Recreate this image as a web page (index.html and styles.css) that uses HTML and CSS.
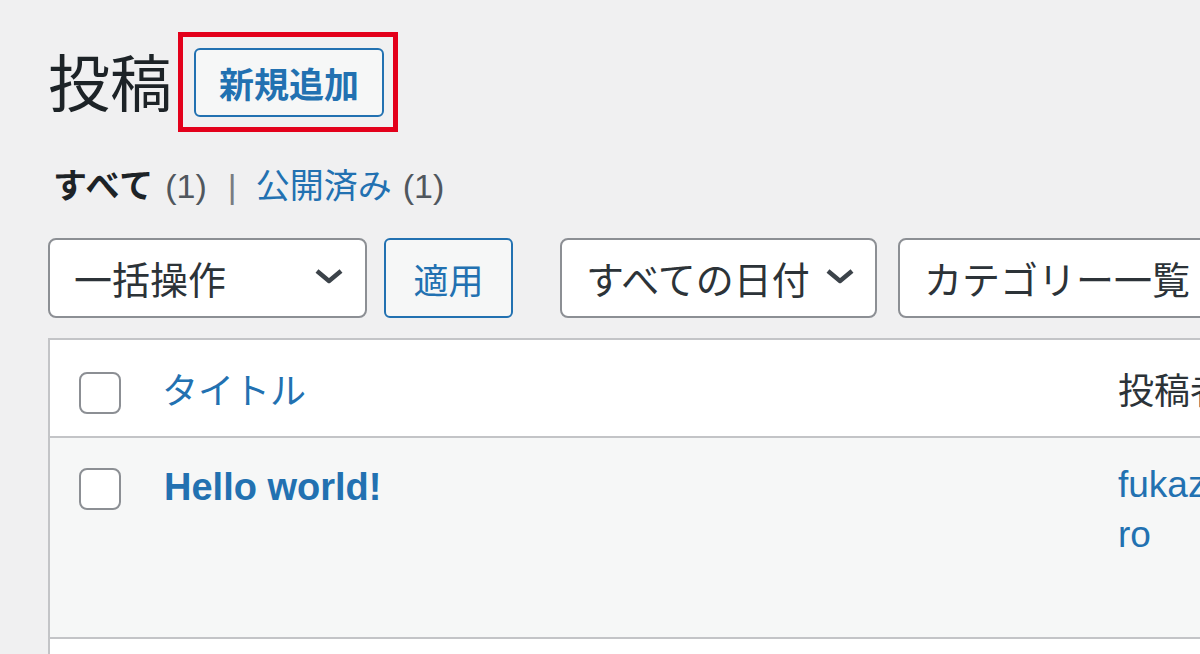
FILE: index.html
```html
<!DOCTYPE html>
<html lang="ja">
<head>
<meta charset="utf-8">
<title>投稿</title>
<link rel="stylesheet" href="styles.css">
</head>
<body>
<div class="wrap">
  <div class="title-row">
    <h1 class="page-title">投稿</h1>
    <div class="highlight">
      <a class="page-title-action" href="#">新規追加</a>
    </div>
  </div>

  <div class="subsubsub">
    <a class="current" href="#">すべて</a><span class="count">(1)</span>
    <span class="sep">|</span>
    <a class="status" href="#">公開済み</a><span class="count">(1)</span>
  </div>

  <div class="tablenav">
    <div class="select select-bulk">
      <span class="select-text">一括操作</span>
      <svg class="chev" width="30" height="16" viewBox="0 0 30 16"><path d="M3 3 L15 13 L27 3" fill="none" stroke="#3c434a" stroke-width="4.5" stroke-linejoin="round"/></svg>
    </div>
    <a class="button" href="#">適用</a>
    <div class="select select-date">
      <span class="select-text">すべての日付</span>
      <svg class="chev" width="30" height="16" viewBox="0 0 30 16"><path d="M3 3 L15 13 L27 3" fill="none" stroke="#3c434a" stroke-width="4.5" stroke-linejoin="round"/></svg>
    </div>
    <div class="select select-cat">
      <span class="select-text">カテゴリー一覧</span>
    </div>
  </div>

  <div class="list-table">
    <div class="row head">
      <span class="checkbox"></span>
      <a class="col-title head-title" href="#">タイトル</a>
      <span class="col-author head-author">投稿者</span>
    </div>
    <div class="row item">
      <span class="checkbox"></span>
      <a class="col-title row-title" href="#">Hello world!</a>
      <a class="col-author author-link" href="#">fukazi<br>ro</a>
    </div>
    <div class="row next"></div>
  </div>
</div>
</body>
</html>
```

FILE: styles.css
```css
html, body {
  margin: 0;
  padding: 0;
}
body {
  width: 1200px;
  height: 654px;
  overflow: hidden;
  background: #f0f0f1;
  font-family: "Liberation Sans", "Noto Sans CJK JP", sans-serif;
  color: #2c3338;
}
a {
  text-decoration: none;
  color: #2271b1;
}
.wrap {
  padding: 32px 0 0 48px;
}

/* title row */
.title-row {
  display: flex;
  align-items: center;
  height: 100px;
}
.page-title {
  margin: -4px 6px 0 0;
  font-size: 62px;
  line-height: 1;
  font-weight: 400;
  color: #1d2327;
  font-family: "Noto Sans CJK JP", sans-serif;
}
.highlight {
  border: 5px solid #e3001b;
  padding: 11px 9px 10px 11px;
}
.page-title-action {
  display: flex;
  align-items: center;
  justify-content: center;
  box-sizing: border-box;
  width: 190px;
  height: 69px;
  border: 2px solid #2271b1;
  border-radius: 6px;
  background: #f6f7f7;
  font-family: "Noto Sans CJK JP", sans-serif;
  font-weight: 700;
  font-size: 35px;
  color: #2271b1;
}

/* status links */
.subsubsub {
  margin-top: 34px;
  height: 40px;
  display: flex;
  align-items: center;
  font-size: 34px;
  line-height: 40px;
  color: #50575e;
  white-space: nowrap;
}
.subsubsub .current {
  color: #1d2327;
  font-weight: 700;
  margin-left: 5px;
  letter-spacing: 1px;
}
.subsubsub .count {
  margin-left: 11px;
  color: #50575e;
}
.subsubsub .sep {
  margin: 0 19px 0 21px;
  color: #787c82;
}
.subsubsub .status {
  color: #2271b1;
}

/* filters */
.tablenav {
  margin-top: 32px;
  display: flex;
  align-items: center;
  height: 80px;
}
.select {
  box-sizing: border-box;
  height: 80px;
  border: 2px solid #8c8f94;
  border-radius: 8px;
  background: #fff;
  display: flex;
  align-items: center;
  justify-content: space-between;
  font-size: 38px;
  color: #2c3338;
  white-space: nowrap;
  flex-shrink: 0;
}
.select-text {
  font-family: "Noto Sans CJK JP", sans-serif;
  line-height: 1;
}
.chev {
  display: block;
  margin-bottom: 4px;
}
.select-bulk {
  width: 319px;
  padding: 0 21px 0 24px;
}
.select-date {
  width: 317px;
  padding: 0 20px 0 24px;
  margin-left: 47px;
}
.select-cat {
  width: 340px;
  padding: 0 24px;
  margin-left: 21px;
  justify-content: flex-start;
}
.button {
  box-sizing: border-box;
  width: 129px;
  height: 80px;
  margin-left: 17px;
  border: 2px solid #2271b1;
  border-radius: 6px;
  background: #f6f7f7;
  display: flex;
  align-items: center;
  justify-content: center;
  font-family: "Noto Sans CJK JP", sans-serif;
  font-size: 35px;
  color: #2271b1;
  flex-shrink: 0;
}

/* table */
.list-table {
  margin-top: 20px;
  width: 1300px;
  border: 2px solid #c3c4c7;
  border-bottom: none;
  background: #fff;
}
.row {
  display: flex;
  border-bottom: 2px solid #c3c4c7;
}
.checkbox {
  box-sizing: border-box;
  width: 42px;
  height: 42px;
  border: 2px solid #8c8f94;
  border-radius: 8px;
  background: #fff;
  margin-left: 29px;
  flex-shrink: 0;
}
.col-title {
  margin-left: 41px;
  width: 956px;
  flex-shrink: 0;
}
.col-author {
  flex-shrink: 0;
}
.head {
  height: 96px;
  align-items: center;
}
.head .checkbox {
  margin-top: 10px;
}
.head-title {
  font-family: "Noto Sans CJK JP", sans-serif;
  font-size: 36px;
  line-height: 40px;
  color: #2271b1;
}
.head-author {
  font-family: "Noto Sans CJK JP", sans-serif;
  font-size: 36px;
  line-height: 40px;
  color: #2c3338;
}
.item {
  height: 199px;
  align-items: flex-start;
  background: #f6f7f7;
}
.item .checkbox {
  margin-top: 30px;
}
.row-title {
  margin-top: 24px;
  margin-left: 43px;
  width: 954px;
  font-size: 38px;
  line-height: 50px;
  font-weight: 700;
  color: #2271b1;
}
.author-link {
  margin-top: 22px;
  font-size: 37px;
  line-height: 50px;
  color: #2271b1;
}
.next {
  height: 60px;
  border-bottom: none;
}
```
